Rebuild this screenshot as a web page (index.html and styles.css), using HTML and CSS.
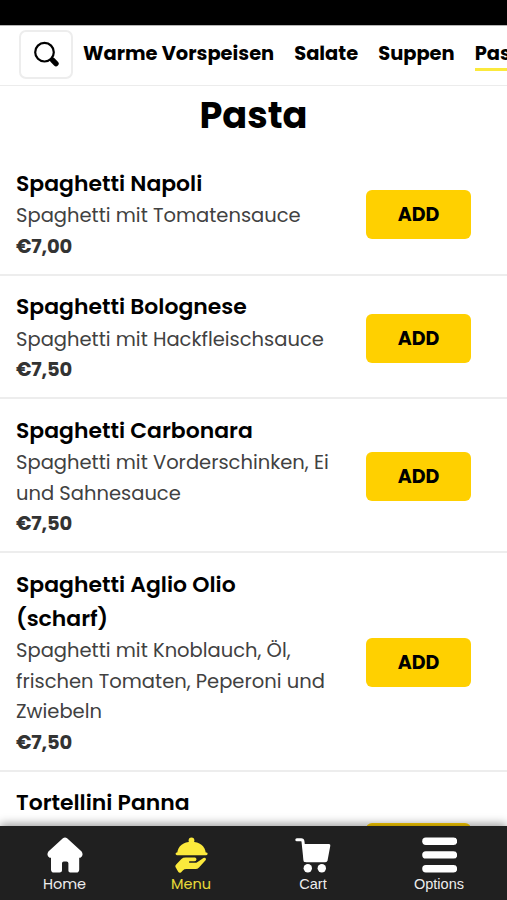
FILE: index.html
```
<!DOCTYPE html>
<html lang="de">
<head>
<meta charset="utf-8">
<meta name="viewport" content="width=device-width, initial-scale=1">
<title>Menu</title>
<link rel="stylesheet" href="styles.css">
</head>
<body>
<div class="app">
  <div class="status"></div>
  <header class="categories">
    <button class="search" aria-label="Suche">
      <svg viewBox="0 0 27 27" width="27" height="27"><circle cx="11.5" cy="11.2" r="9.3" fill="none" stroke="#000" stroke-width="2.2"/><path d="M17.5 17.5L19 19" stroke="#000" stroke-width="3"/><path d="M19.6 19.2L23 22.6" stroke="#000" stroke-width="5.4" stroke-linecap="round"/></svg>
    </button>
    <nav class="tabs">
      <a class="tab">Warme Vorspeisen</a>
      <a class="tab">Salate</a>
      <a class="tab">Suppen</a>
      <a class="tab tab-active">Pasta</a>
    </nav>
  </header>
  <main class="menu">
    <h1 class="heading">Pasta</h1>
    <article class="item">
      <div class="info"><h2 class="name">Spaghetti Napoli</h2><p class="desc">Spaghetti mit Tomatensauce</p><p class="price">€7,00</p></div>
      <button class="add">ADD</button>
    </article>
    <article class="item">
      <div class="info"><h2 class="name">Spaghetti Bolognese</h2><p class="desc">Spaghetti mit Hackfleischsauce</p><p class="price">€7,50</p></div>
      <button class="add">ADD</button>
    </article>
    <article class="item">
      <div class="info"><h2 class="name">Spaghetti Carbonara</h2><p class="desc">Spaghetti mit Vorderschinken, Ei<br>und Sahnesauce</p><p class="price">€7,50</p></div>
      <button class="add">ADD</button>
    </article>
    <article class="item">
      <div class="info"><h2 class="name">Spaghetti Aglio Olio<br>(scharf)</h2><p class="desc">Spaghetti mit Knoblauch, Öl,<br>frischen Tomaten, Peperoni und<br>Zwiebeln</p><p class="price">€7,50</p></div>
      <button class="add">ADD</button>
    </article>
    <article class="item item-last">
      <div class="info"><h2 class="name">Tortellini Panna</h2></div>
      <button class="add add-low" aria-label="ADD"></button>
    </article>
  </main>
  <footer class="bar">
    <a class="link">
      <svg class="icon" viewBox="0 0 36 36"><path d="M15.9 1.2Q18 -.2 20.1 1.2L34.6 14.4Q37 18.6 33.4 20.8H32.2V32.5Q32.2 35.6 29.2 35.6H24.2Q21.4 35.6 21.4 33.6V26.2Q21.4 24.4 19.6 24.4H16.8Q15 24.4 15 26.2V33.6Q15 35.6 12.6 35.6H7Q4 35.6 4 32.5V20.8H2.6Q-1 18.6 1.4 14.4Z"/></svg>
      <span class="label">Home</span>
    </a>
    <a class="link link-active">
      <svg class="icon" viewBox="0 0 36 36"><circle cx="18.5" cy="3.4" r="2.9"/><path d="M4.2 16C5 8.8 10.5 4.8 18.5 4.8S32 8.8 32.8 16Z"/><rect x="2.6" y="15.4" width="32" height="2.8" rx="1.4"/><path d="M3.4 27.2L8.4 22Q10 20.6 12.8 20.6H21.8Q23.7 20.8 23.4 22.8Q23 24.3 21.2 24.3H16.4Q15.4 25.2 16.6 25.8H21.8Q23.4 25.8 24.6 24.9L30.4 21Q33.4 20.2 32.8 23L26 30.5Q24.5 32 22.6 32H13.5Q11.2 32 9.8 33.4L8.2 35.2Q6.4 36.4 5.2 34.8L2.6 30.2Q1.8 28.7 3.4 27.2Z"/></svg>
      <span class="label">Menu</span>
    </a>
    <a class="link">
      <svg class="icon" viewBox="0 0 36 36"><path d="M1.8 2.8H6.2Q7.8 2.8 8 4.6L10 23.5" fill="none" stroke="currentColor" stroke-width="3" stroke-linecap="round"/><path d="M7.6 7H34Q35.6 7 35.3 8.8L32.6 23.2Q32.2 25.2 30.2 25.2H11Q9.2 25.2 8.9 23Z"/><circle cx="12.8" cy="31.3" r="4.2"/><circle cx="26.8" cy="31.3" r="4.2"/></svg>
      <span class="label label-plain">Cart</span>
    </a>
    <a class="link">
      <svg class="icon" viewBox="0 0 36 36"><rect x="1.2" y=".5" width="35" height="7.4" rx="3.7"/><rect x="1.2" y="14.2" width="35" height="7.4" rx="3.7"/><rect x="1.2" y="28" width="35" height="7.4" rx="3.7"/></svg>
      <span class="label label-plain">Options</span>
    </a>
  </footer>
</div>
</body>
</html>
```
FILE: styles.css
```
* { box-sizing: border-box; }
body { margin: 0; background: #fff; color: #000; font-family: Poppins, Inter, "Open Sans", sans-serif; }
h1, h2, p { margin: 0; }
button { font: inherit; color: inherit; padding: 0; }
.app { display: flex; flex-direction: column; height: 900px; overflow: hidden; }
.status { flex: none; height: 25px; background: #000; }
.categories { flex: none; display: flex; align-items: flex-start; height: 61px; padding: 4px 0 0 19px; border-top: 1px solid #b5b5b5; border-bottom: 1px solid #ececec; overflow: hidden; }
.search { flex: none; width: 54px; height: 49px; border: 2px solid #ededed; border-radius: 7px; background: #fff; display: flex; align-items: center; justify-content: center; padding-left: 1px; }
.tabs { display: flex; gap: 20px; margin: 7px 0 0 10px; white-space: nowrap; }
.tab { height: 34px; font-size: 19.45px; font-weight: 700; line-height: 34px; }
.tab-active { border-bottom: 3px solid #fbe93c; }
.menu { flex: 1; min-height: 0; overflow: hidden; }
.heading { height: 66.2px; font-size: 36.7px; font-weight: 700; line-height: 58px; text-align: center; }
.item { display: flex; align-items: center; justify-content: space-between; padding: 14.6px 36px 11.4px 16px; border-bottom: 2px solid #ededed; }
.name { font-size: 21.93px; font-weight: 600; line-height: 33.9px; }
.desc, .price { font-size: 19.5px; line-height: 30.5px; color: #414141; }
.desc { padding-top: .6px; }
.price { font-weight: 700; color: #333; letter-spacing: -.2px; }
.add { flex: none; width: 105px; height: 49px; border: 0; border-radius: 6px; background: #ffd000; font-size: 19px; font-weight: 700; }
.item-last { align-items: flex-start; border: 0; }
.add-low { margin-top: 37px; }
.bar { flex: none; position: relative; display: grid; grid-template-columns: 129px 124px 120px 132px; height: 74px; padding-top: 11px; background: #202020; color: #fff; box-shadow: 0 -2px 9px rgba(0,0,0,.4); }
.link { display: flex; flex-direction: column; align-items: center; }
.link-active { color: #fbe93c; }
.icon { width: 36px; height: 36px; fill: currentColor; }
.label { font-size: 14.5px; line-height: 23px; opacity: .92; }
.label-plain { font-family: "Liberation Sans", Arial, sans-serif; }
```
